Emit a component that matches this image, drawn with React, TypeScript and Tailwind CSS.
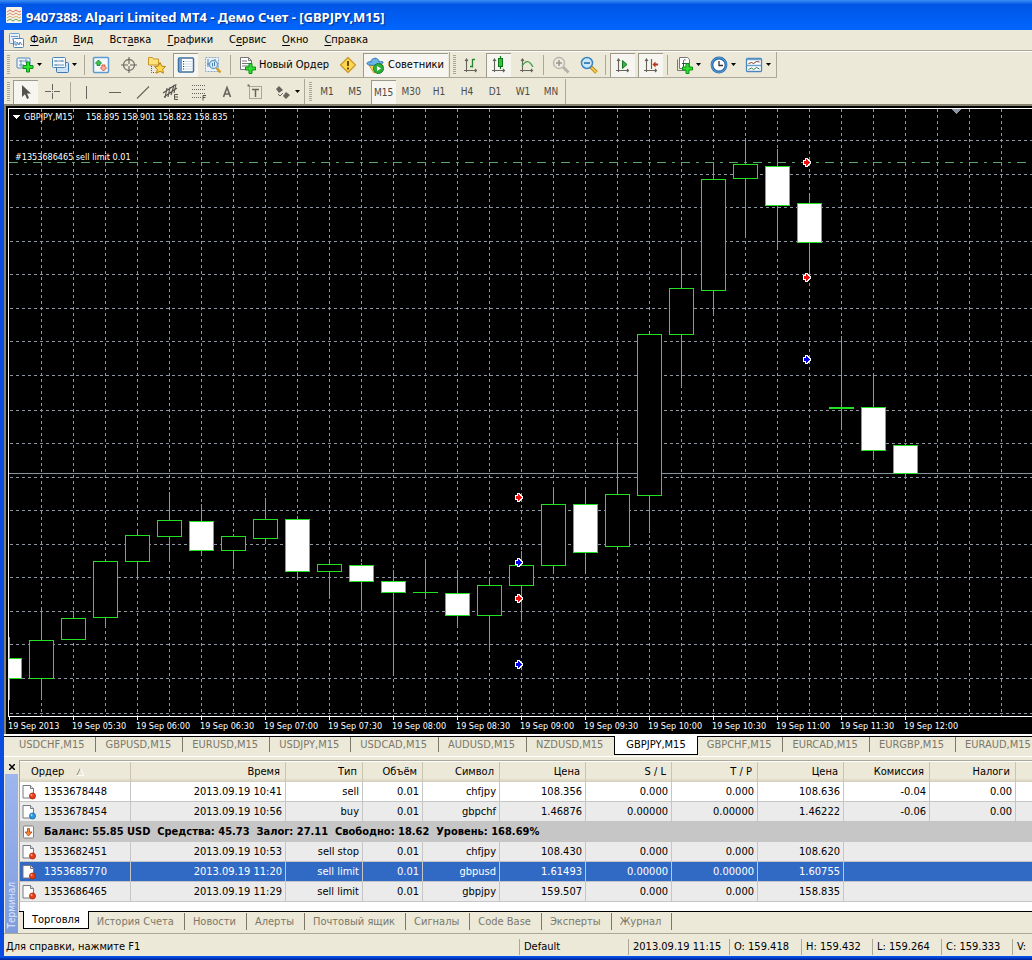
import React, { useState } from 'react';
import clsx from 'clsx';

type Candle = {
  top: number;
  bottom: number;
  high: number;
  low: number;
  filled?: boolean;
};

const CANDLE_STEP = 32;
const CHART_LEFT = 9;

const candles: Candle[] = [
  { top: 658, bottom: 679, high: 637, low: 700, filled: true },
  { top: 640, bottom: 679, high: 609, low: 698 },
  { top: 618, bottom: 640, high: 611, low: 640 },
  { top: 561, bottom: 618, high: 560, low: 625 },
  { top: 535, bottom: 562, high: 529, low: 577 },
  { top: 520, bottom: 537, high: 492, low: 560 },
  { top: 521, bottom: 551, high: 504, low: 556, filled: true },
  { top: 536, bottom: 551, high: 534, low: 569 },
  { top: 519, bottom: 539, high: 498, low: 541 },
  { top: 519, bottom: 572, high: 516, low: 580, filled: true },
  { top: 564, bottom: 572, high: 562, low: 599 },
  { top: 565, bottom: 582, high: 563, low: 611, filled: true },
  { top: 581, bottom: 593, high: 570, low: 674, filled: true },
  { top: 592, bottom: 593, high: 559, low: 599 },
  { top: 593, bottom: 616, high: 570, low: 625, filled: true },
  { top: 585, bottom: 616, high: 577, low: 650 },
  { top: 565, bottom: 586, high: 551, low: 620 },
  { top: 504, bottom: 566, high: 488, low: 574 },
  { top: 504, bottom: 553, high: 490, low: 573, filled: true },
  { top: 494, bottom: 547, high: 438, low: 549 },
  { top: 334, bottom: 496, high: 334, low: 533 },
  { top: 288, bottom: 335, high: 249, low: 385 },
  { top: 179, bottom: 291, high: 162, low: 315 },
  { top: 164, bottom: 179, high: 138, low: 237 },
  { top: 166, bottom: 206, high: 149, low: 248, filled: true },
  { top: 203, bottom: 243, high: 196, low: 276, filled: true },
  { top: 407, bottom: 409, high: 336, low: 429 },
  { top: 407, bottom: 451, high: 373, low: 458, filled: true },
  { top: 445, bottom: 474, high: 443, low: 479, filled: true },
];

const gridRows = [140, 174, 207, 241, 274, 308, 341, 375, 410, 443, 477, 510, 544, 577, 611, 644, 678, 713];

const timeLabels = [
  '19 Sep 2013', '19 Sep 05:30', '19 Sep 06:00', '19 Sep 06:30', '19 Sep 07:00',
  '19 Sep 07:30', '19 Sep 08:00', '19 Sep 08:30', '19 Sep 09:00', '19 Sep 09:30',
  '19 Sep 10:00', '19 Sep 10:30', '19 Sep 11:00', '19 Sep 11:30', '19 Sep 12:00',
];

const markers = [
  { x: 803, y: 158, color: '#ee1010' },
  { x: 803, y: 273, color: '#ee1010' },
  { x: 803, y: 355, color: '#0000ee' },
  { x: 515, y: 493, color: '#ee1010' },
  { x: 515, y: 558, color: '#0000ee' },
  { x: 515, y: 594, color: '#ee1010' },
  { x: 515, y: 660, color: '#0000ee' },
];

const symbols = ['USDCHF', 'GBPUSD', 'EURUSD', 'USDJPY', 'USDCAD', 'AUDUSD', 'NZDUSD', 'GBPJPY', 'GBPCHF', 'EURCAD', 'EURGBP', 'EURAUD'];

const terminalTabs = ['Торговля', 'История Счета', 'Новости', 'Алерты', 'Почтовый ящик', 'Сигналы', 'Code Base', 'Эксперты', 'Журнал'];

const timeframes = ['M1', 'M5', 'M15', 'M30', 'H1', 'H4', 'D1', 'W1', 'MN'];

const menu = [
  ['', 'Ф', 'айл'],
  ['', 'В', 'ид'],
  ['Вст', 'а', 'вка'],
  ['', 'Г', 'рафики'],
  ['С', 'е', 'рвис'],
  ['', 'О', 'кно'],
  ['', 'С', 'правка'],
];

const columns = [
  { title: 'Ордер', width: 'w-[111px]' },
  { title: 'Время', width: 'w-[155px]' },
  { title: 'Тип', width: 'w-[77px]' },
  { title: 'Объём', width: 'w-[60px]' },
  { title: 'Символ', width: 'w-[77px]' },
  { title: 'Цена', width: 'w-[86px]' },
  { title: 'S / L', width: 'w-[86px]' },
  { title: 'T / P', width: 'w-[86px]' },
  { title: 'Цена', width: 'w-[86px]' },
  { title: 'Комиссия', width: 'w-[86px]' },
  { title: 'Налоги', width: 'w-[86px]' },
];

const openOrders = [
  ['1353678448', '2013.09.19 10:41', 'sell', '0.01', 'chfjpy', '108.356', '0.000', '0.000', '108.636', '-0.04', '0.00'],
  ['1353678454', '2013.09.19 10:56', 'buy', '0.01', 'gbpchf', '1.46876', '0.00000', '0.00000', '1.46222', '-0.06', '0.00'],
];

const pendingOrders = [
  ['1353682451', '2013.09.19 10:53', 'sell stop', '0.01', 'chfjpy', '108.430', '0.000', '0.000', '108.620'],
  ['1353685770', '2013.09.19 11:20', 'sell limit', '0.01', 'gbpusd', '1.61493', '0.00000', '0.00000', '1.60755'],
  ['1353686465', '2013.09.19 11:29', 'sell limit', '0.01', 'gbpjpy', '159.507', '0.000', '0.000', '158.835'],
];

/* Icons */

const Icon: React.FC<{ children: React.ReactNode }> = ({ children }) => (
  <svg width="18" height="18" viewBox="0 0 18 18" fill="none" className="shrink-0">
    {children}
  </svg>
);

const GreenPlus = ({ x, y }: { x: number; y: number }) => (
  <path
    d={`M${x + 3.5} ${y}h3v3.5h3.5v3h-3.5v3.5h-3v-3.5h-3.5v-3h3.5z`}
    fill="#2fe02f"
    stroke="#0b8f17"
  />
);

const NewChartIcon = () => (
  <Icon>
    <rect x="1" y="2" width="13" height="10" rx="1" fill="#eef5fc" stroke="#4f86b8" />
    <path d="M3 5h9M3 9h5M5 4v7M10 3v4" stroke="#6d93b5" />
    <GreenPlus x={7} y={6} />
  </Icon>
);

const ProfilesIcon = () => (
  <Icon>
    <rect x="5.5" y="6.5" width="12" height="10" rx="1" fill="#cfe2f5" stroke="#3f78b0" />
    <rect x="1.5" y="1.5" width="13" height="10" rx="1" fill="#f2f8fd" stroke="#4f86b8" />
    <path d="M3 5h10M3 9h10M5 4v2M5 8v2M11 4v2" stroke="#6d93b5" />
  </Icon>
);

const MarketWatchIcon = () => (
  <Icon>
    <rect x="1.5" y="1.5" width="15" height="15" rx="1" fill="#f5fafe" stroke="#5b9bd0" strokeWidth="1.5" />
    <path d="M6.5 4l3 3-1.5 1.5v1H5v-1L3.5 7z" fill="#39c54a" stroke="#167a26" strokeWidth=".8" />
    <path d="M11.5 15l-3-3L10 10.500V9h3v1.500l1.500 1.500z" fill="#f8b29c" stroke="#c43a1a" strokeWidth=".8" />
  </Icon>
);

const CrosshairIcon = () => (
  <Icon>
    <circle cx="9" cy="9" r="5.5" stroke="#77756c" strokeWidth="1.3" />
    <path d="M9 1v7M9 10v7M1 9h7M10 9h7" stroke="#66645d" strokeWidth="1.1" />
  </Icon>
);

const NavigatorIcon = () => (
  <Icon>
    <path d="M.5 1.5h4l1 1.5h5v6h-10z" fill="#ffe27a" stroke="#c4962a" />
    <path d="M3.5 10v6.5h4" stroke="#555" strokeDasharray="1 1" />
    <path d="M12 6.5l1.7 3.6 3.8.5-2.8 2.700.7 3.900-3.400-1.900-3.400 1.900.7-3.900-2.800-2.700 3.800-.5z" fill="#ffd84d" stroke="#b98212" />
  </Icon>
);

const TerminalIcon = () => (
  <Icon>
    <rect x="1.5" y="2" width="15" height="14" rx="1" fill="#fff" stroke="#3c6f9f" strokeWidth="1.5" />
    <path d="M2 3h3v12H2z" fill="#6fa0cc" />
    <path d="M7 5.5h8M7 8h8M7 10.5h8M7 13h8" stroke="#cadbe9" />
    <path d="M6 5.5h1M6 8h1M6 10.5h1M6 13h1" stroke="#333" />
  </Icon>
);

const TesterIcon = () => (
  <Icon>
    <rect x="1.5" y="1.5" width="13" height="14" fill="#eaf3fb" stroke="#8aa9c5" strokeDasharray="2 1" />
    <path d="M4 3v8M3 8h3M11 3v3" stroke="#4d80ae" />
    <circle cx="9.5" cy="8.5" r="4" fill="#d6ecfa" stroke="#6f9cc2" strokeWidth="1.3" />
    <path d="M8.500 10.500V7M10.500 6v4" stroke="#4d80ae" />
    <path d="M12.5 12l4 4.5" stroke="#d79b23" strokeWidth="2.5" />
  </Icon>
);

const NewOrderIcon = () => (
  <Icon>
    <path d="M2.5 1.5h8l3 3v9h-11z" fill="#fff" stroke="#777" />
    <path d="M10.5 1.5v3h3M4 5h5M4 7.5h7M4 10h7" stroke="#777" />
    <GreenPlus x={7.5} y={7.5} />
  </Icon>
);

const WarningIcon = () => (
  <Icon>
    <path d="M9 1.5L16.5 9 9 16.5 1.5 9z" fill="#ffd84a" stroke="#c99a2c" strokeWidth="1.3" strokeLinejoin="round" />
    <path d="M9 5v5M9 11.5v2" stroke="#6b4a08" strokeWidth="2" />
  </Icon>
);

const ExpertsIcon = () => (
  <Icon>
    <path d="M3 9l5 8 8-2 1-6z" fill="#f4d24a" stroke="#bd9a2b" />
    <path d="M5 6c0-5 8-5 8 0 2-.5 4-1 4 .5 0 3-16 4-16 1 0-1.5 2.5-2 4-1.5z" fill="#6fb4e8" stroke="#2c75ae" />
    <circle cx="12.5" cy="12.500" r="5" fill="#2fae3c" stroke="#14802a" />
    <path d="M11 10l4 2.5-4 2.5z" fill="#fff" />
  </Icon>
);

const Axes = () => (
  <path d="M4.5 3v13M2 14.5h12.500M3 5l1.5-2L6 5M13 13l1.500 1.500L13 16" stroke="#65635c" strokeWidth="1.1" />
);

const BarChartIcon = () => (
  <Icon>
    <Axes />
    <path d="M8 10.5h2.500M10.500 3v8.500M10.500 3.500H13" stroke="#23852d" strokeWidth="1.3" />
  </Icon>
);

const CandleChartIcon = () => (
  <Icon>
    <Axes />
    <path d="M10.500 0v13" stroke="#0c7717" strokeWidth="1.2" />
    <rect x="8.5" y="2.5" width="4" height="8" fill="#2ec43c" stroke="#0c7717" />
  </Icon>
);

const LineChartIcon = () => (
  <Icon>
    <Axes />
    <path d="M4 10c4-6 7-6 11 1" stroke="#3e9a45" strokeWidth="1.3" />
  </Icon>
);

const ZoomInIcon = () => (
  <Icon>
    <path d="M11 11l5.5 5.5" stroke="#b5b3a8" strokeWidth="3" />
    <circle cx="7" cy="7" r="5.5" fill="#eceae0" stroke="#b5b3a8" strokeWidth="1.3" />
    <path d="M4 7h6M7 4v6" stroke="#99978c" strokeWidth="1.5" />
  </Icon>
);

const ZoomOutIcon = () => (
  <Icon>
    <path d="M11 11l5.5 5.5" stroke="#b8860b" strokeWidth="3.5" />
    <path d="M11 11l5.5 5.5" stroke="#ffd75a" strokeWidth="1.5" />
    <circle cx="7" cy="7" r="5.5" fill="#c9e9fb" stroke="#3b83bd" strokeWidth="1.5" />
    <path d="M4 7h6" stroke="#23649c" strokeWidth="1.5" />
  </Icon>
);

const AutoScrollIcon = () => (
  <Icon>
    <Axes />
    <path d="M8.500 4.500l4.500 4-4.500 4z" fill="#37b245" stroke="#167a22" />
  </Icon>
);

const ShiftIcon = () => (
  <Icon>
    <Axes />
    <path d="M9.500 3v10" stroke="#65635c" strokeWidth="1.2" />
    <path d="M10.500 8.500l3-3v2H16v2h-2.500v2z" fill="#c03015" />
  </Icon>
);

const IndicatorsIcon = () => (
  <Icon>
    <path d="M4.5 1.5h8l2 2v9h-10z" fill="#fff" stroke="#777" />
    <path d="M2.5 3.5v11h8" stroke="#777" />
    <path d="M10.500 4c-2-1-2 1-2 2.500v5M7 7.500h4" stroke="#444" />
    <GreenPlus x={7.5} y={7.5} />
  </Icon>
);

const ClockIcon = () => (
  <Icon>
    <circle cx="9" cy="9" r="7" fill="#fff" stroke="#2467a8" strokeWidth="2.8" />
    <circle cx="9" cy="9" r="7.3" stroke="#6fb2ea" strokeWidth=".8" />
    <path d="M9 5v4.500h4" stroke="#333" strokeWidth="1.3" />
  </Icon>
);

const TemplatesIcon = () => (
  <Icon>
    <rect x="1.5" y="2.500" width="15" height="13" rx="1" fill="#fff" stroke="#4b86bb" strokeWidth="1.3" />
    <path d="M2 3.5h14M2 9.5h14" stroke="#6ea3d1" strokeWidth="1.5" />
    <path d="M3.500 7.500l3-1 2 1 3-2 3 .5" stroke="#7c3a1e" />
    <path d="M3.500 13.500l3-1.500 2 1.500 3-2 3 1.500" stroke="#30784a" />
  </Icon>
);

const CursorIcon = () => (
  <Icon>
    <path d="M5 2v12l3-2.800 2 4.800 2-1-2-4.500h4z" fill="#55534e" />
  </Icon>
);

const CrossIcon = () => (
  <Icon>
    <path d="M8.5 1v6M8.5 10v6M1 8.5h6M10 8.5h6M8 8.5h1" stroke="#66645d" />
  </Icon>
);

const VLineIcon = () => (
  <Icon>
    <path d="M8.5 3v13" stroke="#66645d" />
  </Icon>
);

const HLineIcon = () => (
  <Icon>
    <path d="M3 9.500h12" stroke="#66645d" />
  </Icon>
);

const TrendIcon = () => (
  <Icon>
    <path d="M3 15.5L15 3.500" stroke="#66645d" strokeWidth="1.1" />
  </Icon>
);

const ChannelIcon = () => (
  <Icon>
    <path d="M1 10L13 2M2 14L15 5M5 5L3 15M8 4L6 14M12 2L9 12M14 1l-2 9" stroke="#55534e" strokeWidth="1.1" />
    <path d="M16 11.500h-3.500v5H16M12.500 14H16" stroke="#55534e" />
  </Icon>
);

const FiboIcon = () => (
  <Icon>
    <path d="M2 2.5h14M2 6.5h14M2 10.5h14M2 14.5h9" stroke="#66645d" strokeDasharray="1 1" />
    <path d="M16 12.500h-3v5M13 14.500h2.500" stroke="#55534e" />
  </Icon>
);

const TextIcon = () => (
  <Icon>
    <path d="M5.5 14L9 4.500l3.500 9.500M6.500 11h5" stroke="#66645d" strokeWidth="1.6" />
  </Icon>
);

const LabelIcon = () => (
  <Icon>
    <rect x="3.5" y="3.5" width="12" height="12" stroke="#66645d" strokeDasharray="1 1" />
    <path d="M1.5 2.500h2M2.500 1.500v2M6 6.500h7M9.500 6.500V14" stroke="#66645d" strokeWidth="1.5" />
  </Icon>
);

const ArrowsIcon = () => (
  <Icon>
    <path d="M5 3l4 4-4 3-3-4z" fill="#66645d" />
    <path d="M4 11l2 2 3-3" stroke="#66645d" />
    <path d="M12 9l4 3-4 4-3-3z" fill="#66645d" />
  </Icon>
);

const OrderIcon = ({ color, dark }: { color: string; dark: string }) => (
  <svg width="14" height="16" viewBox="0 0 14 16" fill="none" className="shrink-0">
    <path d="M1 1.5h7.500l3 3v9.500H1z" fill="#fff" stroke="#76797f" />
    <path d="M8.500 1.500v3h3" fill="#dfe3e8" stroke="#76797f" />
    <circle cx="10.500" cy="12" r="3" fill={color} stroke={dark} strokeWidth=".8" />
    <circle cx="9.500" cy="11" r=".9" fill="#fff" opacity=".6" />
  </svg>
);

const BalanceIcon = () => (
  <svg width="14" height="16" viewBox="0 0 14 16" fill="none" className="shrink-0">
    <rect x="1.5" y="2" width="10" height="12" rx="1" fill="#fff" stroke="#85807c" />
    <path d="M5.500 4.500h2V8H10l-3.500 4L3 8h2.500z" fill="#f08a3c" stroke="#b23c14" strokeWidth=".8" />
  </svg>
);

/* Toolbar parts */

const Grip = () => (
  <div className="mr-px ml-[3px] h-[19px] w-[3px] shrink-0 self-center bg-[repeating-linear-gradient(to_bottom,#a9a694_0_1px,#ece9d8_1px_2px)]" />
);

const Separator = () => (
  <div className="flex w-[6px] shrink-0 justify-center self-center">
    <div className="h-5 w-px bg-[#aca899]" />
  </div>
);

const pressedStyle = 'border-t border-l border-[#9d9a8b] bg-[#f6f5ef]';

type ToolProps = { label: string; pressed?: boolean; children: React.ReactNode };

const Tool: React.FC<ToolProps> = ({ label, pressed, children }) => (
  <div className="flex w-7 shrink-0 items-center justify-center">
    <button aria-label={label} className={clsx('flex h-6 w-[25px] items-center justify-center', pressed && pressedStyle)}>
      {children}
    </button>
  </div>
);

const DropTool: React.FC<{ label: string; children: React.ReactNode }> = ({ label, children }) => (
  <button aria-label={label} className="flex w-[35px] shrink-0 items-center justify-center gap-[3px]">
    {children}
    <svg width="5" height="3" viewBox="0 0 5 3"><path d="M0 0h5L2.5 3z" fill="#000" /></svg>
  </button>
);

/* Chart */

const Chart: React.FC = () => {
  const gridColumns = Array.from({ length: 90 }, (_, i) => CHART_LEFT + (i + 1) * CANDLE_STEP);

  return (
    <svg width="100%" height="628" className="block bg-black" shapeRendering="crispEdges">
      <g transform="translate(-6 -106)">
        <g stroke="#8d959e" strokeDasharray="3 3">
          {gridColumns.map((x) => (
            <line key={x} x1={x + 0.5} x2={x + 0.5} y1="109" y2="716" />
          ))}
          {gridRows.map((y) => (
            <line key={y} x1="10" x2="110%" y1={y + 0.5} y2={y + 0.5} />
          ))}
        </g>
        <line x1="9" x2="110%" y1="162.5" y2="162.5" stroke="#5aa56c" strokeDasharray="9 6 3 6" />
        <line x1="9" x2="110%" y1="473.5" y2="473.5" stroke="#8492a0" />
        <path d="M952 109h9l-4.500 5z" fill="#8a96a3" />

        {candles.map((c, i) => {
          const x = CHART_LEFT + i * CANDLE_STEP;
          const left = Math.max(x - 12, CHART_LEFT - 1);
          const right = x + 13;
          return (
            <g key={i}>
              <rect x={x} y={c.high} width="1" height={c.low - c.high} fill="#22e022" />
              <rect x={left} y={c.top} width={right - left} height={c.bottom - c.top} fill="#22e022" />
              {c.bottom - c.top > 2 && (
                <rect
                  x={left + 1}
                  y={c.top + 1}
                  width={right - left - 2}
                  height={c.bottom - c.top - 2}
                  fill={c.filled ? '#ffffff' : '#000000'}
                />
              )}
            </g>
          );
        })}

        {markers.map((m, i) => (
          <g key={i} transform={`translate(${m.x} ${m.y})`}>
            <path d="M0 2h2V0h3v1h1v1h1v1h1v3H7v1H6v1H5v1H2V7H0z" fill="#ffffff" />
            <path d="M1 3h2V1h1v1h1v1h1v1h1v1H6v1H5v1H4v1H3V6H1z" fill={m.color} />
          </g>
        ))}

        <path d="M8.5 716.500V108.500" stroke="#ffffff" />
        <line x1="8" x2="110%" y1="108.5" y2="108.5" stroke="#ffffff" />
        <line x1="8" x2="110%" y1="716.5" y2="716.5" stroke="#ffffff" />

        <path d="M12 115h8l-4 4z" fill="#ffffff" />
        <g fill="#ffffff" fontSize="9">
          <text x="24" y="120">GBPJPY,M15</text>
          <text x="86" y="120">158.895 158.901 158.823 158.835</text>
          <text x="15" y="160">#1353686465 sell limit 0.01</text>
          {timeLabels.map((label, i) => (
            <g key={label}>
              <rect x={CHART_LEFT + i * 64} y="717" width="1" height="3" />
              <text x={CHART_LEFT - 1 + i * 64} y="729">{label}</text>
            </g>
          ))}
        </g>
      </g>
    </svg>
  );
};

/* Orders table */

type OrderRowProps = { cells: string[]; shaded?: boolean; selected?: boolean; onSelect: () => void };

const OrderRow: React.FC<OrderRowProps> = ({ cells, shaded, selected, onSelect }) => {
  const isBuy = cells[2] === 'buy';
  return (
    <tr
      onClick={onSelect}
      className={clsx('h-5', selected ? 'bg-[#316ac5] text-white' : shaded ? 'bg-[#ebebeb]' : 'bg-white')}
    >
      {cells.map((cell, i) => (
        <td
          key={i}
          className={clsx('h-5 border-r border-b border-[#c6c6c6] p-0', i > 0 && 'pr-[3px] text-right')}
        >
          {i === 0 ? (
            <div className="flex h-[19px] items-center gap-2 pl-[2px]">
              <OrderIcon color={isBuy ? '#2f9be0' : '#e8401c'} dark={isBuy ? '#12629c' : '#a3220a'} />
              {cell}
            </div>
          ) : (
            cell
          )}
        </td>
      ))}
      <td colSpan={12 - cells.length} className="border-b border-[#c6c6c6] p-0" />
    </tr>
  );
};

const OrdersTable: React.FC = () => {
  const [selected, setSelected] = useState('1353685770');

  return (
    <table className="w-full table-fixed border-separate border-spacing-0 leading-[14px]">
      <thead>
        <tr className="h-5">
          {columns.map((col, i) => (
            <th
              key={i}
              className={clsx(
                col.width,
                'h-5 border-r border-r-[#c9c5b2] bg-linear-to-b from-[#ece9d8] from-80% to-[#d3cfbd] p-0 font-normal',
                i === 0 ? 'pl-[11px] text-left' : 'pr-[5px] text-right'
              )}
            >
              {col.title}
              {i === 0 && (
                <svg width="9" height="8" viewBox="0 0 9 8" fill="none" className="ml-3 inline">
                  <path d="M1 7L4.500 0" stroke="#8b887a" />
                  <path d="M4.500 0L8 7.500H1" stroke="#fff" />
                </svg>
              )}
            </th>
          ))}
          <th className="bg-linear-to-b from-[#ece9d8] from-80% to-[#d3cfbd] p-0" />
        </tr>
      </thead>
      <tbody>
        {openOrders.map((cells, i) => (
          <OrderRow key={cells[0]} cells={cells} shaded={i % 2 === 1} selected={selected === cells[0]} onSelect={() => setSelected(cells[0])} />
        ))}
        <tr className="h-5 bg-[#c6c6c6]">
          <td colSpan={12} className="p-0 font-bold">
            <div className="flex h-5 items-center gap-2 pl-[2px] whitespace-pre">
              <BalanceIcon />
              {'Баланс: 55.85 USD  Средства: 45.73  Залог: 27.11  Свободно: 18.62  Уровень: 168.69%'}
            </div>
          </td>
        </tr>
        {pendingOrders.map((cells) => (
          <OrderRow key={cells[0]} cells={cells} shaded selected={selected === cells[0]} onSelect={() => setSelected(cells[0])} />
        ))}
      </tbody>
    </table>
  );
};

const App: React.FC = () => {
  const [symbol, setSymbol] = useState('GBPJPY');
  const [terminalTab, setTerminalTab] = useState('Торговля');
  const [timeframe, setTimeframe] = useState('M15');

  return (
    <div className="flex min-h-screen w-full flex-col overflow-hidden bg-[#ece9d8] font-['DejaVu_Sans_Condensed','DejaVu_Sans',sans-serif] text-[11px] text-black">
      {/* Title bar */}
      <header className="flex h-[30px] shrink-0 items-center gap-1 bg-linear-to-b from-[#3a8df5] via-[#0055e5] via-15% to-[#0066ff] pl-[6px]">
        <svg width="16" height="16" viewBox="0 0 16 16" fill="none">
          <rect width="16" height="16" rx="1" fill="#f6f3ea" />
          <path d="M1 5l3-2 3 2 3-2 3 2 2-1" stroke="#d8705c" />
          <path d="M1 8l3-2 3 2 3-2 3 2 2-1" stroke="#d88b62" />
          <path d="M1 11l3-2 3 2 3-2 3 2 2-1" stroke="#d8a862" />
          <path d="M1 14l3-2 3 2 3-2 3 2 2-1" stroke="#58a05f" />
        </svg>
        <h1 className="pt-[3px] font-['Noto_Sans','Open_Sans',sans-serif] text-[13px] leading-4 font-bold whitespace-nowrap text-white [text-shadow:1px_1px_1px_#0a2a80]">
          9407388: Alpari Limited MT4 - Демо Счет - [GBPJPY,M15]
        </h1>
      </header>

      <div className="flex flex-1 flex-col border-l-4 border-[#0a4be0]">
        {/* Menu */}
        <nav className="flex h-[21px] shrink-0 items-center gap-4 border-b border-[#aca899] pt-px pl-[5px]">
          <svg width="15" height="15" viewBox="0 0 15 15" fill="none" className="-mr-[10px]">
            <rect x=".5" y=".5" width="10" height="10" rx="1" fill="#e6f1fb" stroke="#6c9ecb" />
            <path d="M2 3.500h7M3 6h4" stroke="#6c9ecb" />
            <rect x="4.500" y="5.500" width="10" height="9" rx="1" fill="#fff" stroke="#4f86b8" />
            <path d="M6 8v4h2V9l2 3 1-3 2 3" stroke="#4f86b8" />
          </svg>
          {menu.map(([before, key, after]) => (
            <button key={before + key + after}>
              {before}
              <span className="underline underline-offset-2">{key}</span>
              {after}
            </button>
          ))}
        </nav>

        {/* Main toolbar */}
        <div className="flex h-[27px] shrink-0 items-stretch border-t border-white">
          <div className="flex items-stretch border-r border-b border-[#aca899]">
            <Grip />
            <DropTool label="Новый график"><NewChartIcon /></DropTool>
            <DropTool label="Профили"><ProfilesIcon /></DropTool>
            <Separator />
            <Tool label="Обзор рынка"><MarketWatchIcon /></Tool>
            <Tool label="Окно данных"><CrosshairIcon /></Tool>
            <Tool label="Навигатор"><NavigatorIcon /></Tool>
            <Tool label="Терминал" pressed><TerminalIcon /></Tool>
            <Tool label="Тестер стратегий"><TesterIcon /></Tool>
            <Separator />
            <button className="flex shrink-0 items-center gap-[3px] px-[5px]">
              <NewOrderIcon />
              <span className="pt-[2px]">Новый Ордер</span>
            </button>
            <Tool label="MetaEditor"><WarningIcon /></Tool>
            <button className={clsx('mx-px flex h-6 shrink-0 items-center gap-1 self-center pr-1 pl-[2px]', pressedStyle)}>
              <ExpertsIcon />
              <span className="pt-px">Советники</span>
            </button>
          </div>
          <div className="flex items-stretch border-r border-b border-[#aca899]">
            <Grip />
            <Tool label="Бары"><BarChartIcon /></Tool>
            <Tool label="Японские свечи" pressed><CandleChartIcon /></Tool>
            <Tool label="Линия"><LineChartIcon /></Tool>
            <Separator />
            <Tool label="Увеличить"><ZoomInIcon /></Tool>
            <Tool label="Уменьшить"><ZoomOutIcon /></Tool>
            <Separator />
            <Tool label="Автопрокрутка" pressed><AutoScrollIcon /></Tool>
            <Tool label="Сдвиг графика" pressed><ShiftIcon /></Tool>
            <Separator />
            <DropTool label="Индикаторы"><IndicatorsIcon /></DropTool>
            <DropTool label="Периоды"><ClockIcon /></DropTool>
            <DropTool label="Шаблоны"><TemplatesIcon /></DropTool>
          </div>
        </div>

        {/* Line studies and timeframes */}
        <div className="flex h-[26px] shrink-0 items-stretch pt-px">
          <div className="flex items-stretch border-r border-[#aca899]">
            <Grip />
            <Tool label="Курсор" pressed><CursorIcon /></Tool>
            <Tool label="Перекрестие"><CrossIcon /></Tool>
            <Separator />
            <Tool label="Вертикальная линия"><VLineIcon /></Tool>
            <Tool label="Горизонтальная линия"><HLineIcon /></Tool>
            <Tool label="Трендовая линия"><TrendIcon /></Tool>
            <Tool label="Канал"><ChannelIcon /></Tool>
            <Tool label="Фибоначчи"><FiboIcon /></Tool>
            <Tool label="Текст"><TextIcon /></Tool>
            <Tool label="Метка"><LabelIcon /></Tool>
            <DropTool label="Стрелки"><ArrowsIcon /></DropTool>
          </div>
          <div className="flex items-stretch border-r border-[#aca899] pl-px text-[10px] text-[#4d4b45]">
            <Grip />
            {timeframes.map((tf) => (
              <div key={tf} className="flex w-7 shrink-0 items-center justify-center">
                <button
                  onClick={() => setTimeframe(tf)}
                  className={clsx('h-6 w-[25px]', timeframe === tf && pressedStyle)}
                >
                  {tf}
                </button>
              </div>
            ))}
          </div>
        </div>

        <main className="shrink-0 border-t-2 border-l-2 border-[#85826f]">
          <Chart />
        </main>

        {/* Chart tabs */}
        <div className="flex h-[23px] shrink-0 items-stretch overflow-hidden border-t-2 border-b border-white">
          <div className="w-[6px] shrink-0 border-t border-black" />
          {symbols.map((s, i) => (
            <button
              key={s}
              onClick={() => setSymbol(s)}
              className={clsx(
                'flex shrink-0 items-start whitespace-nowrap',
                s === symbol
                  ? 'h-[19px] border-x border-b border-black bg-white px-[11px] pt-px'
                  : 'border-t border-black text-[#7b786a]'
              )}
            >
              {s === symbol ? (
                `${s},M15`
              ) : (
                <span className={clsx('border-[#7b786a] pr-[11px] pl-[9px] leading-[15px]', symbols[i + 1] !== symbol && i < symbols.length - 1 && 'border-r')}>
                  {s},M15
                </span>
              )}
            </button>
          ))}
          <div className="flex-1 border-t border-black" />
        </div>

        {/* Terminal */}
        <section className="flex shrink-0 pt-[3px]">
          <div className="flex w-[15px] shrink-0 flex-col items-center">
            <button aria-label="Закрыть" className="flex h-[14px] w-full items-center justify-center">
              <svg width="6" height="6" viewBox="0 0 6 6"><path d="M0 0l6 6M6 0L0 6" stroke="#000" strokeWidth="1.5" /></svg>
            </button>
            <div className="flex w-[13px] flex-1 items-end justify-center bg-linear-to-b from-[#9db6ee] to-[#7f9ddd] pb-1">
              <span className="rotate-180 text-[10px] leading-[13px] text-[#dfe8fb] [writing-mode:vertical-rl]">Терминал</span>
            </div>
          </div>
          <div className="min-w-0 flex-1">
            <div className="border-t border-l border-[#aca899] bg-white pt-px pb-[9px]">
              <OrdersTable />
            </div>
            <div className="flex h-[22px] items-stretch">
              <div className="w-1 shrink-0 border-t border-black" />
              {terminalTabs.map((t) => (
                <button
                  key={t}
                  onClick={() => setTerminalTab(t)}
                  className={clsx(
                    'flex shrink-0 items-start whitespace-nowrap',
                    t === terminalTab
                      ? 'h-[18px] border-x border-b border-black bg-white px-2 pt-px'
                      : 'border-t border-black text-[#7b786a]'
                  )}
                >
                  {t === terminalTab ? t : <span className="mt-px border-r border-[#7b786a] pr-[10px] pl-2 leading-[17px]">{t}</span>}
                </button>
              ))}
              <div className="flex-1 border-t border-black" />
            </div>
          </div>
        </section>

        {/* Status bar */}
        <footer className="flex h-[23px] shrink-0 items-center overflow-hidden border-t border-[#aca899] pt-1 whitespace-nowrap">
          <div className="min-w-0 flex-1 pl-[2px]">Для справки, нажмите F1</div>
          <div className="w-[109px] shrink-0 border-l border-[#aca899] pl-1">Default</div>
          <div className="w-[101px] shrink-0 border-l border-[#aca899] pl-1">2013.09.19 11:15</div>
          <div className="w-[72px] shrink-0 border-l border-[#aca899] pl-1">O: 159.418</div>
          <div className="w-[71px] shrink-0 border-l border-[#aca899] pl-1">H: 159.432</div>
          <div className="w-[69px] shrink-0 border-l border-[#aca899] pl-1">L: 159.264</div>
          <div className="w-[71px] shrink-0 border-l border-[#aca899] pl-1">C: 159.333</div>
          <div className="w-5 shrink-0 border-l border-[#aca899] pl-1">V:</div>
        </footer>
      </div>
      <div className="h-1 shrink-0 bg-linear-to-b from-[#0a5cf5] to-[#001e9c]" />
    </div>
  );
};

export default App;
